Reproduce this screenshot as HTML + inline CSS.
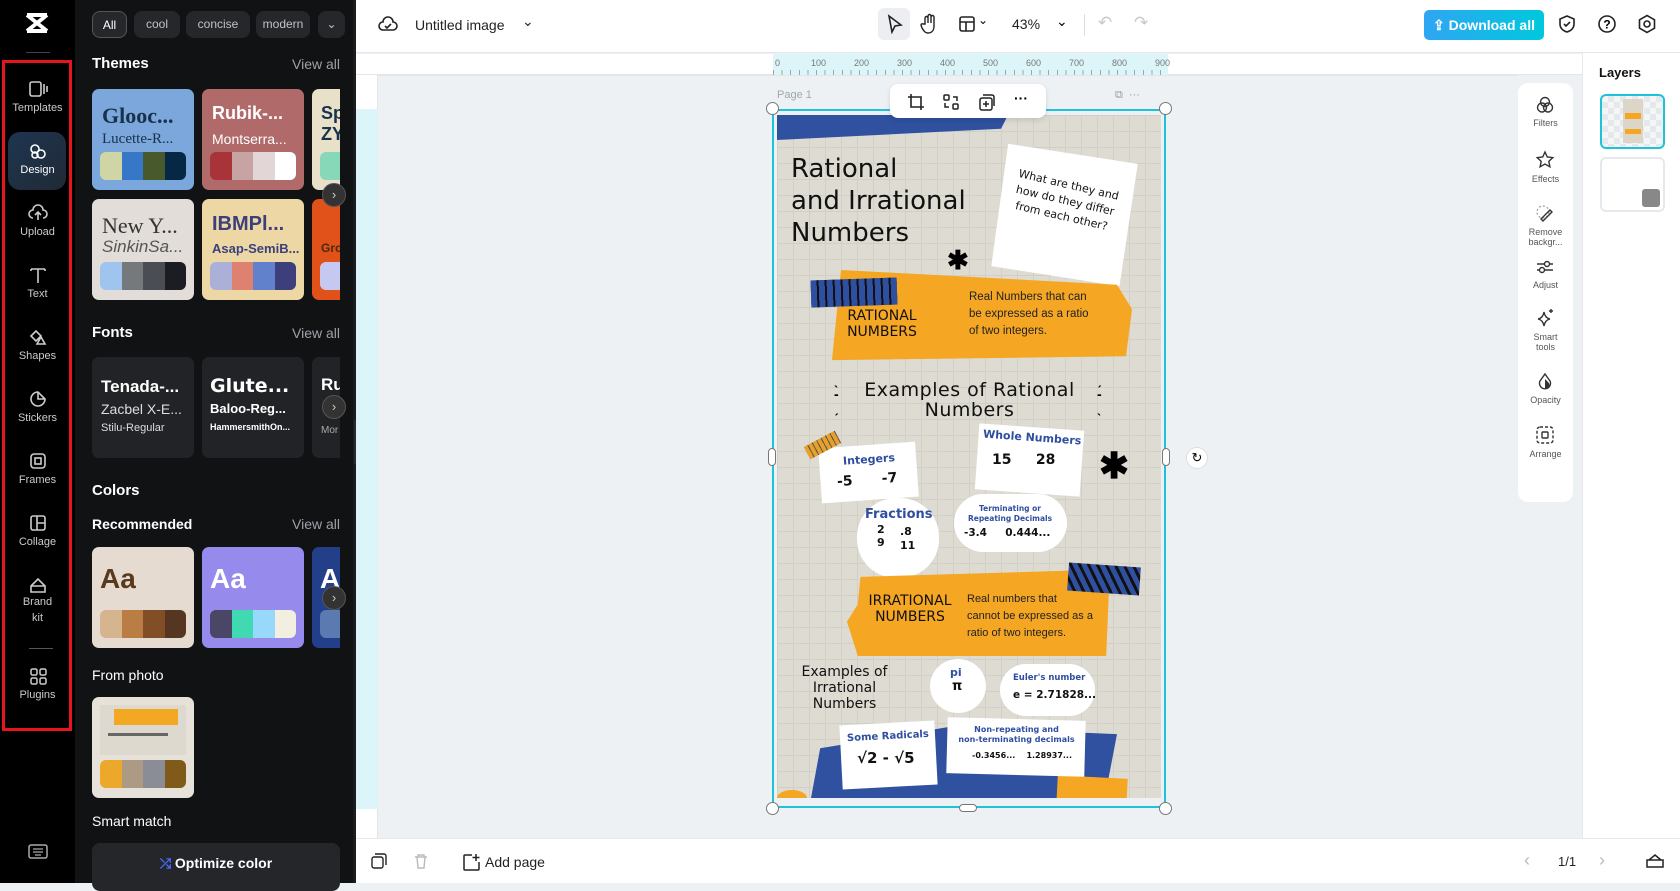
<!DOCTYPE html>
<html><head><meta charset="utf-8"><style>
*{box-sizing:border-box;margin:0;padding:0}
body{width:1680px;height:883px;overflow:hidden;font-family:"Liberation Sans",sans-serif;background:#eef1f4;position:relative}
.a{position:absolute}
.rail{left:0;top:0;width:75px;height:883px;background:#000}
.ri{position:absolute;left:0;width:75px;text-align:center;color:#c9cbd0;font-size:11px}
.ri svg{display:block;margin:0 auto 4px}
.panel{left:75px;top:0;width:281px;height:883px;background:#111214;color:#fff}
.chip{position:absolute;top:11px;height:27px;border-radius:8px;background:#26272b;color:#bfc2c8;font-size:12px;line-height:27px;text-align:center}
.h{position:absolute;font-weight:bold;font-size:15px;color:#fff}
.va{position:absolute;right:16px;font-size:14px;color:#9da1a8}
.card{position:absolute;width:102px;height:101px;border-radius:7px;overflow:hidden}
.sw{position:absolute;left:8px;bottom:10px;width:86px;height:28px;border-radius:6px;overflow:hidden;display:flex}
.sw i{flex:1}
.nx{position:absolute;width:24px;height:24px;border-radius:50%;background:#333;border:1px solid #555;color:#ccc;font-size:13px;line-height:22px;text-align:center}
.top{left:356px;top:0;width:1324px;height:53px;background:#fff;border-bottom:1px solid #e5e7eb}
.art{left:777px;top:115px;width:384px;height:683px;background:#dedbd2;overflow:hidden;
background-image:linear-gradient(#d2cfc6 1px,transparent 1px),linear-gradient(90deg,#d2cfc6 1px,transparent 1px);background-size:16px 16px}
.w{position:absolute;background:#fff}
.hw{font-family:"DejaVu Sans",sans-serif;color:#111}
.bl{color:#2f4ea0;font-weight:bold;font-family:"DejaVu Sans",sans-serif}
.tl{position:absolute;left:0;width:55px;text-align:center;font-size:9px;color:#555}
</style></head><body>

<div class="a rail">
 <svg class="a" style="left:24px;top:12px" width="26" height="22" viewBox="0 0 26 22"><path d="M3 3 L23 19 M23 3 L3 19 M3 3h20 M3 19h20" stroke="#fff" stroke-width="4" fill="none"/></svg>
 <div class="a" style="left:26px;top:52px;width:24px;height:1px;background:#444"></div>
 <div class="a" style="left:2px;top:60px;width:70px;height:671px;border:3px solid #e5141f"></div>
 <div class="ri" style="top:80px"><svg width="20" height="18"><rect x="2" y="2" width="11" height="14" rx="2" fill="none" stroke="#ccc" stroke-width="1.6"/><path d="M16 4v10M19 6v6" stroke="#ccc" stroke-width="1.6"/></svg>Templates</div>
 <div class="a" style="left:8px;top:132px;width:58px;height:58px;border-radius:12px;background:linear-gradient(135deg,#1e3550,#202a36)"></div>
 <div class="ri" style="top:142px;color:#fff"><svg width="20" height="18"><circle cx="7" cy="7" r="4" fill="none" stroke="#fff" stroke-width="1.6"/><circle cx="13" cy="12" r="4" fill="none" stroke="#fff" stroke-width="1.6"/><circle cx="7" cy="13" r="3" fill="none" stroke="#fff" stroke-width="1.6"/></svg>Design</div>
 <div class="ri" style="top:204px"><svg width="20" height="18"><path d="M5 14a4 4 0 0 1 0-8 5 5 0 0 1 10 0 4 4 0 0 1 0 8M10 8v8M7 11l3-3 3 3" fill="none" stroke="#ccc" stroke-width="1.6"/></svg>Upload</div>
 <div class="ri" style="top:266px"><svg width="20" height="18"><path d="M3 3h14M10 3v14M3 3v2M17 3v2" fill="none" stroke="#ccc" stroke-width="1.6"/></svg>Text</div>
 <div class="ri" style="top:328px"><svg width="20" height="18"><path d="M3 8l5-5 5 5-5 5z M9 16l4-7 4 7z" fill="none" stroke="#ccc" stroke-width="1.6"/></svg>Shapes</div>
 <div class="ri" style="top:390px"><svg width="20" height="18"><path d="M10 2a7 7 0 1 0 7 7l-7-7z M10 2v7h7" fill="none" stroke="#ccc" stroke-width="1.6"/></svg>Stickers</div>
 <div class="ri" style="top:452px"><svg width="20" height="18"><rect x="3" y="2" width="14" height="14" rx="3" fill="none" stroke="#ccc" stroke-width="1.6"/><rect x="7" y="6" width="6" height="6" fill="none" stroke="#ccc" stroke-width="1.6"/></svg>Frames</div>
 <div class="ri" style="top:514px"><svg width="20" height="18"><rect x="3" y="2" width="14" height="14" rx="2" fill="none" stroke="#ccc" stroke-width="1.6"/><path d="M9 2v14M9 9h8" stroke="#ccc" stroke-width="1.6"/></svg>Collage</div>
 <div class="ri" style="top:576px;line-height:16px"><svg width="20" height="18" style="margin-bottom:0"><path d="M3 10l7-7 7 7v6H3z M3 10h14" fill="none" stroke="#ccc" stroke-width="1.6"/></svg>Brand<br>kit</div>
 <div class="a" style="left:29px;top:648px;width:24px;height:1px;background:#555"></div>
 <div class="ri" style="top:667px"><svg width="20" height="18"><rect x="3" y="2" width="6" height="6" rx="1.5" fill="none" stroke="#ccc" stroke-width="1.5"/><rect x="12" y="2" width="6" height="6" rx="1.5" fill="none" stroke="#ccc" stroke-width="1.5"/><rect x="3" y="11" width="6" height="6" rx="1.5" fill="none" stroke="#ccc" stroke-width="1.5"/><rect x="12" y="11" width="6" height="6" rx="1.5" fill="none" stroke="#ccc" stroke-width="1.5"/></svg>Plugins</div>
 <svg class="a" style="left:28px;top:844px" width="20" height="16"><rect x="1" y="1" width="18" height="13" rx="2" fill="none" stroke="#aaa" stroke-width="1.5"/><path d="M5 5h10M5 8h10M7 11h6" stroke="#aaa" stroke-width="1.3"/></svg>
</div>

<div class="a panel">
 <div class="chip" style="left:17px;width:35px;border:1px solid #555;color:#fff">All</div>
 <div class="chip" style="left:59px;width:46px">cool</div>
 <div class="chip" style="left:111px;width:64px">concise</div>
 <div class="chip" style="left:181px;width:54px;overflow:hidden">modern</div>
 <div class="chip" style="left:243px;width:27px">⌄</div>
 <div class="h" style="left:17px;top:55px">Themes</div><div class="va" style="top:56px">View all</div>
 <div style="position:absolute;left:17px;top:89px;width:248px;height:212px;overflow:hidden">
  <div class="card" style="left:0;top:0;background:#7ba7dc"><div style="position:absolute;left:10px;top:14px;font:bold 22px 'Liberation Serif',serif;color:#17324a">Glooc...</div><div style="position:absolute;left:10px;top:42px;font:15px 'Liberation Serif',serif;color:#17324a">Lucette-R...</div><div class="sw"><i style="background:#cfd5a4"></i><i style="background:#3777c8"></i><i style="background:#485a2c"></i><i style="background:#062845"></i></div></div>
  <div class="card" style="left:110px;top:0;background:#b06a6a"><div style="position:absolute;left:10px;top:14px;font:bold 18px sans-serif;color:#fff">Rubik-...</div><div style="position:absolute;left:10px;top:42px;font:14px sans-serif;color:#fff">Montserra...</div><div class="sw"><i style="background:#a8343a"></i><i style="background:#c8a3a3"></i><i style="background:#e3d6d6"></i><i style="background:#fff"></i></div></div>
  <div class="card" style="left:220px;top:0;background:#e8e0c8"><div style="position:absolute;left:9px;top:14px;font:bold 18px sans-serif;color:#17324a">Sp<br>ZY</div><div style="position:absolute;left:8px;bottom:10px;width:30px;height:28px;background:#86d8b8;border-radius:6px"></div></div>
  <div class="card" style="left:0;top:110px;background:#e2ddd8"><div style="position:absolute;left:10px;top:14px;font:22px 'Liberation Serif',serif;color:#333">New Y...</div><div style="position:absolute;left:10px;top:38px;font:italic 17px sans-serif;color:#555">SinkinSa...</div><div class="sw"><i style="background:#9fc5ef"></i><i style="background:#76797c"></i><i style="background:#4a4d54"></i><i style="background:#1b1d22"></i></div></div>
  <div class="card" style="left:110px;top:110px;background:#edd7a5"><div style="position:absolute;left:10px;top:14px;font:bold 20px sans-serif;color:#3b3f7c">IBMPl...</div><div style="position:absolute;left:10px;top:42px;font:bold 13px sans-serif;color:#3b3f7c">Asap-SemiB...</div><div class="sw"><i style="background:#aab0d8"></i><i style="background:#df8170"></i><i style="background:#6281cc"></i><i style="background:#3c3f7c"></i></div></div>
  <div class="card" style="left:220px;top:110px;background:#e0521a"><div style="position:absolute;left:9px;top:42px;font:bold 12px sans-serif;color:#4a2a10">Gro</div><div style="position:absolute;left:8px;bottom:10px;width:30px;height:28px;background:#c5c8f0;border-radius:6px"></div></div>
 </div>
 <div class="nx" style="left:247px;top:183px">›</div>
 <div class="h" style="left:17px;top:324px">Fonts</div><div class="va" style="top:325px">View all</div>
 <div style="position:absolute;left:17px;top:357px;width:248px;height:102px;overflow:hidden">
  <div class="card" style="left:0;top:0;background:#222326"><div style="position:absolute;left:9px;top:20px;font:bold 17px sans-serif">Tenada-...</div><div style="position:absolute;left:9px;top:44px;font:14px sans-serif;color:#ddd">Zacbel X-E...</div><div style="position:absolute;left:9px;top:65px;font:11px sans-serif;color:#ddd">Stilu-Regular</div></div>
  <div class="card" style="left:110px;top:0;background:#222326"><div style="position:absolute;left:8px;top:18px;font:bold 19px 'DejaVu Sans',sans-serif">Glute...</div><div style="position:absolute;left:8px;top:44px;font:bold 13px sans-serif">Baloo-Reg...</div><div style="position:absolute;left:8px;top:65px;font:bold 9px sans-serif">HammersmithOn...</div></div>
  <div class="card" style="left:220px;top:0;background:#222326"><div style="position:absolute;left:9px;top:18px;font:bold 17px sans-serif">Ru</div><div style="position:absolute;left:9px;top:68px;font:10px sans-serif;color:#aaa">Mor</div></div>
 </div>
 <div class="nx" style="left:247px;top:395px">›</div>
 <div class="h" style="left:17px;top:482px">Colors</div>
 <div class="h" style="left:17px;top:516px;font-size:14px;font-weight:bold">Recommended</div><div class="va" style="top:516px">View all</div>
 <div style="position:absolute;left:17px;top:547px;width:248px;height:102px;overflow:hidden">
  <div class="card" style="left:0;top:0;background:#e5dbd0"><div style="position:absolute;left:8px;top:16px;font:bold 28px sans-serif;color:#5a3a1e">Aa</div><div class="sw"><i style="background:#d6b58e"></i><i style="background:#b97d45"></i><i style="background:#824e25"></i><i style="background:#563521"></i></div></div>
  <div class="card" style="left:110px;top:0;background:#968aec"><div style="position:absolute;left:8px;top:16px;font:bold 28px sans-serif;color:#fff">Aa</div><div class="sw"><i style="background:#4a4666"></i><i style="background:#40d9b1"></i><i style="background:#98d8fa"></i><i style="background:#f3efe0"></i></div></div>
  <div class="card" style="left:220px;top:0;background:#243f8a"><div style="position:absolute;left:8px;top:16px;font:bold 28px sans-serif;color:#fff">A</div><div style="position:absolute;left:8px;bottom:10px;width:30px;height:28px;background:#5a7ab0;border-radius:6px"></div></div>
 </div>
 <div class="nx" style="left:247px;top:586px">›</div>
 <div class="h" style="left:17px;top:667px;font-size:14px;font-weight:normal">From photo</div>
 <div class="card" style="left:17px;top:697px;background:#e6e2da"><div style="position:absolute;left:8px;top:8px;width:86px;height:50px;background:#ddd9cf"><div style="position:absolute;left:14px;top:4px;width:64px;height:16px;background:#f2a823"></div><div style="position:absolute;left:8px;top:28px;width:60px;height:3px;background:#666"></div></div><div class="sw"><i style="background:#eba82a"></i><i style="background:#ad9a84"></i><i style="background:#8a8d95"></i><i style="background:#805a19"></i></div></div>
 <div class="h" style="left:17px;top:813px;font-size:14px;font-weight:normal">Smart match</div>
 <div class="a" style="left:17px;top:843px;width:248px;height:48px;border-radius:8px;background:#25262a;text-align:center;line-height:40px;font-weight:bold;font-size:14px"><span style="color:#4a6cf7">⤮</span> Optimize color</div>
 <div class="a" style="left:278px;top:0;width:3px;height:883px;background:#1b1c1f"></div>
</div>
<div class="a" style="left:354px;top:420px;width:8px;height:44px;background:#2a2b2e;border-radius:0 6px 6px 0"></div>

<div class="a top">
 <svg class="a" style="left:22px;top:15px" width="20" height="20"><path d="M5 15a4 4 0 0 1 0-8 5 5 0 0 1 10 0 4 4 0 0 1 0 8z M7 11l2 2 4-4" fill="none" stroke="#222" stroke-width="1.6"/></svg>
 <div class="a" style="left:59px;top:17px;font-size:14px;color:#222">Untitled image</div>
 <div class="a" style="left:166px;top:13px;font-size:14px;color:#222">⌄</div>
 <div class="a" style="left:522px;top:8px;width:32px;height:32px;border-radius:6px;background:#eceef1"></div>
 <svg class="a" style="left:530px;top:14px" width="18" height="20"><path d="M3 2l12 9-6 1-3 6z" fill="none" stroke="#222" stroke-width="1.6"/></svg>
 <svg class="a" style="left:563px;top:13px" width="20" height="22"><path d="M6 11V5a1.5 1.5 0 0 1 3 0v5V3a1.5 1.5 0 0 1 3 0v7V4a1.5 1.5 0 0 1 3 0v9c0 4-2 7-6 7-3 0-4-2-6-5l-1-3a1.3 1.3 0 0 1 2-1z" fill="none" stroke="#222" stroke-width="1.4"/></svg>
 <svg class="a" style="left:602px;top:15px" width="18" height="18"><rect x="2" y="2" width="14" height="14" rx="2" fill="none" stroke="#222" stroke-width="1.6"/><path d="M2 7h14M8 7v9" stroke="#222" stroke-width="1.6"/></svg>
 <div class="a" style="left:622px;top:13px;font-size:12px">⌄</div>
 <div class="a" style="left:656px;top:16px;font-size:14px;color:#222">43%</div>
 <div class="a" style="left:700px;top:13px;font-size:14px">⌄</div>
 <div class="a" style="left:728px;top:14px;width:1px;height:22px;background:#ddd"></div>
 <div class="a" style="left:742px;top:13px;font-size:17px;color:#c8c8c8">↶</div>
 <div class="a" style="left:778px;top:13px;font-size:17px;color:#c8c8c8">↷</div>
 <div class="a" style="left:1068px;top:10px;width:120px;height:30px;border-radius:5px;background:linear-gradient(90deg,#2fa6f3,#00c8dc);color:#fff;font-weight:bold;font-size:14px;line-height:30px;text-align:center">⇪ Download all</div>
 <svg class="a" style="left:1202px;top:14px" width="18" height="20"><path d="M9 2l7 3v5c0 4-3 7-7 8-4-1-7-4-7-8V5z M6 10l2 2 4-4" fill="none" stroke="#222" stroke-width="1.6"/></svg>
 <svg class="a" style="left:1241px;top:14px" width="20" height="20"><circle cx="10" cy="10" r="8" fill="none" stroke="#222" stroke-width="1.6"/><text x="10" y="14.5" font-size="12" text-anchor="middle" font-weight="bold" font-family="Liberation Sans">?</text></svg>
 <svg class="a" style="left:1281px;top:14px" width="20" height="20"><path d="M10 1.5l7.5 4.3v8.4L10 18.5l-7.5-4.3V5.8z" fill="none" stroke="#222" stroke-width="1.6"/><circle cx="10" cy="10" r="3" fill="none" stroke="#222" stroke-width="1.6"/></svg>
</div>

<!-- rulers -->
<div class="a" style="left:356px;top:54px;width:1226px;height:21px;background:#fff;border-bottom:1px solid #e3e5e8"></div>
<div class="a" style="left:773px;top:54px;width:395px;height:21px;background:#dcf5f8;font-size:9px;color:#777">
 <span class="a" style="left:2px;top:4px">0</span><span class="a" style="left:38px;top:4px">100</span><span class="a" style="left:81px;top:4px">200</span><span class="a" style="left:124px;top:4px">300</span><span class="a" style="left:167px;top:4px">400</span><span class="a" style="left:210px;top:4px">500</span><span class="a" style="left:253px;top:4px">600</span><span class="a" style="left:296px;top:4px">700</span><span class="a" style="left:339px;top:4px">800</span><span class="a" style="left:382px;top:4px">900</span>
 <div class="a" style="left:0;bottom:0;width:395px;height:5px;background:repeating-linear-gradient(90deg,#9aa 0 1px,transparent 1px 8.6px)"></div>
</div>
<div class="a" style="left:356px;top:75px;width:22px;height:763px;background:#fff;border-right:1px solid #e3e5e8"></div>
<div class="a" style="left:356px;top:109px;width:22px;height:700px;background:#dcf5f8"></div>
<div class="a" style="left:378px;top:75px;width:1140px;height:1px;background:#e3e5e8"></div>

<!-- page -->
<div class="a" style="left:777px;top:89px;font-size:11px;color:#9aa">Page 1</div>
<div class="a" style="left:1115px;top:89px;font-size:11px;color:#999">⧉ &nbsp;···</div>
<div class="a" style="left:772px;top:109px;width:394px;height:699px;border:2px solid #1fc3d9"></div>
<div class="a art">
 <div class="a" style="left:0;top:0;width:231px;height:25px;background:#2f51a0;clip-path:polygon(0 0,100% 0,97% 55%,0 100%)"></div>
 <div class="a hw" style="left:14px;top:38px;font-size:26px;line-height:32px">Rational<br>and Irrational<br>Numbers</div>
 <div class="w" style="left:220px;top:35px;width:135px;height:130px;transform:rotate(6deg);clip-path:polygon(3% 0,100% 5%,96% 100%,0 95%)"></div>
 <div class="a hw" style="left:232px;top:62px;width:112px;font-size:11px;line-height:16px;text-align:center;transform:rotate(13deg)">What are they and how do they differ from each other?</div>
 <div class="a" style="left:170px;top:130px;font-size:26px;font-weight:bold">✱</div>
 <div class="a" style="left:55px;top:155px;width:300px;height:98px;background:#f5a623;clip-path:polygon(3% 0,95% 15%,100% 40%,98% 88%,0 92%)"></div>
 <div class="a" style="left:34px;top:164px;width:86px;height:27px;background:repeating-linear-gradient(90deg,#2f4fa0 0 6px,#111 6px 8px),#2f4fa0;transform:rotate(-2deg)"></div>
 <div class="a hw" style="left:62px;top:193px;width:86px;font-size:14px;line-height:16px;text-align:center">RATIONAL<br>NUMBERS</div>
 <div class="a" style="left:192px;top:174px;font-size:11.5px;line-height:17px;color:#222">Real Numbers that can<br>be expressed as a ratio<br>of two integers.</div>
 <div class="a hw" style="left:35px;top:265px;width:315px;text-align:center;font-size:19px;line-height:20px;letter-spacing:.5px">Examples of Rational<br>Numbers</div>
 <div class="a" style="left:57px;top:258px;font-size:14px;line-height:14px;font-weight:bold">ˎ<br>-<br>ˏ</div>
 <div class="a" style="left:320px;top:258px;font-size:14px;line-height:14px;font-weight:bold">ˏ<br>-<br>ˎ</div>
 <div class="w" style="left:43px;top:330px;width:97px;height:55px;transform:rotate(-4deg)"></div>
 <div class="a" style="left:28px;top:323px;width:35px;height:14px;background:repeating-linear-gradient(90deg,#e7a029 0 4px,#555 4px 5px);transform:rotate(-28deg)"></div>
 <div class="a bl" style="left:66px;top:338px;font-size:11px;transform:rotate(-4deg)">Integers</div>
 <div class="a hw" style="left:60px;top:357px;font-size:14px;font-weight:bold;transform:rotate(-4deg)">-5 &nbsp;&nbsp;&nbsp;&nbsp; -7</div>
 <div class="w" style="left:200px;top:312px;width:105px;height:66px;transform:rotate(4deg)"></div>
 <div class="a bl" style="left:206px;top:316px;font-size:11px;transform:rotate(4deg)">Whole Numbers</div>
 <div class="a hw" style="left:215px;top:337px;font-size:14px;font-weight:bold">15 &nbsp;&nbsp;&nbsp; 28</div>
 <div class="a" style="left:322px;top:330px;font-size:36px;font-weight:bold">✱</div>
 <div class="w" style="left:80px;top:383px;width:82px;height:80px;border-radius:48%"></div>
 <div class="a bl" style="left:88px;top:392px;font-size:13px">Fractions</div>
 <div class="a hw" style="left:100px;top:408px;font-size:11px;line-height:13px;font-weight:bold;text-align:center">2<br>9</div>
 <div class="a hw" style="left:123px;top:410px;font-size:11px;line-height:14px;font-weight:bold">.8<br>11</div>
 <div class="w" style="left:177px;top:379px;width:113px;height:58px;border-radius:30px"></div>
 <div class="a bl" style="left:183px;top:389px;width:100px;text-align:center;font-size:7.5px;line-height:10px">Terminating or<br>Repeating Decimals</div>
 <div class="a hw" style="left:187px;top:412px;font-size:10.5px;font-weight:bold">-3.4 &nbsp;&nbsp;&nbsp; 0.444...</div>
 <div class="a" style="left:70px;top:455px;width:270px;height:86px;background:#f5a623;clip-path:polygon(5% 8%,90% 0,97% 25%,96% 100%,4% 100%,0 60%,4% 40%)"></div>
 <div class="a" style="left:291px;top:450px;width:72px;height:28px;background:repeating-linear-gradient(60deg,#2f4fa0 0 5px,#111 5px 8px);transform:rotate(4deg)"></div>
 <div class="a hw" style="left:78px;top:478px;width:110px;font-size:14px;line-height:16px;text-align:center">IRRATIONAL<br>NUMBERS</div>
 <div class="a" style="left:190px;top:476px;font-size:11px;line-height:17px;color:#222">Real numbers that<br>cannot be expressed as a<br>ratio of two integers.</div>
 <div class="a" style="left:34px;top:612px;width:306px;height:71px;background:#2f51a0;clip-path:polygon(3% 30%,45% 0,100% 10%,96% 100%,0 100%)"></div>
 <div class="a" style="left:0;top:675px;width:30px;height:16px;background:#f5a623;border-radius:50%"></div>
 <div class="a" style="left:280px;top:662px;width:70px;height:30px;background:#f5a623;transform:rotate(3deg)"></div>
 <div class="a hw" style="left:20px;top:549px;width:95px;text-align:center;font-size:14px;line-height:16px">Examples of<br>Irrational<br>Numbers</div>
 <div class="w" style="left:153px;top:544px;width:56px;height:54px;border-radius:50%"></div>
 <div class="a bl" style="left:173px;top:551px;font-size:11px">pi</div>
 <div class="a hw" style="left:175px;top:564px;font-size:13px;font-weight:bold">π</div>
 <div class="w" style="left:223px;top:549px;width:95px;height:52px;border-radius:26px"></div>
 <div class="a bl" style="left:236px;top:558px;font-size:8.5px">Euler's number</div>
 <div class="a hw" style="left:236px;top:574px;font-size:10.5px;font-weight:bold">e = 2.71828...</div>
 <div class="w" style="left:64px;top:608px;width:95px;height:64px;transform:rotate(-3deg)"></div>
 <div class="a bl" style="left:70px;top:616px;font-size:10px;transform:rotate(-3deg)">Some Radicals</div>
 <div class="a hw" style="left:80px;top:634px;font-size:15px;font-weight:bold">√2 - √5</div>
 <div class="w" style="left:170px;top:604px;width:138px;height:56px;transform:rotate(1.5deg)"></div>
 <div class="a bl" style="left:172px;top:610px;width:135px;text-align:center;font-size:8px;line-height:10px">Non-repeating and<br>non-terminating decimals</div>
 <div class="a hw" style="left:195px;top:636px;font-size:8px;font-weight:bold">-0.3456... &nbsp;&nbsp; 1.28937...</div>
</div>
<!-- handles -->
<div class="a" style="left:766px;top:102px;width:13px;height:13px;border-radius:50%;background:#fff;border:1px solid #777"></div>
<div class="a" style="left:1159px;top:102px;width:13px;height:13px;border-radius:50%;background:#fff;border:1px solid #777"></div>
<div class="a" style="left:766px;top:802px;width:13px;height:13px;border-radius:50%;background:#fff;border:1px solid #777"></div>
<div class="a" style="left:1159px;top:802px;width:13px;height:13px;border-radius:50%;background:#fff;border:1px solid #777"></div>
<div class="a" style="left:768px;top:448px;width:8px;height:18px;border-radius:4px;background:#fff;border:1px solid #777"></div>
<div class="a" style="left:1162px;top:448px;width:8px;height:18px;border-radius:4px;background:#fff;border:1px solid #777"></div>
<div class="a" style="left:959px;top:804px;width:18px;height:8px;border-radius:4px;background:#fff;border:1px solid #777"></div>
<div class="a" style="left:1186px;top:447px;width:22px;height:22px;border-radius:50%;background:#fff;border:1px solid #ddd;font-size:13px;text-align:center;line-height:20px">↻</div>
<div class="a" style="left:890px;top:84px;width:156px;height:34px;border-radius:8px;background:#fff;box-shadow:0 2px 6px rgba(0,0,0,.12)">
 <svg class="a" style="left:17px;top:9px" width="18" height="18"><path d="M4 1v13h13M1 4h13v13" fill="none" stroke="#222" stroke-width="1.6"/></svg>
 <svg class="a" style="left:52px;top:9px" width="18" height="18"><rect x="2" y="2" width="5" height="5" rx="1" fill="none" stroke="#222" stroke-width="1.5"/><rect x="11" y="11" width="5" height="5" rx="1" fill="none" stroke="#222" stroke-width="1.5"/><path d="M11 4h4v4M7 14H3v-4" fill="none" stroke="#222" stroke-width="1.5"/></svg>
 <svg class="a" style="left:88px;top:9px" width="18" height="18"><rect x="2" y="5" width="12" height="12" rx="2" fill="none" stroke="#222" stroke-width="1.5"/><path d="M5 2h9a2 2 0 0 1 2 2v9M8 8v6M5 11h6" fill="none" stroke="#222" stroke-width="1.5"/></svg>
 <div class="a" style="left:124px;top:6px;font-size:14px;font-weight:bold">···</div>
</div>

<!-- tools panel -->
<div class="a" style="left:1518px;top:83px;width:55px;height:419px;background:#fff;border-radius:10px">
 <svg class="a" style="left:17px;top:12px" width="20" height="20"><circle cx="10" cy="7" r="4.5" fill="none" stroke="#333" stroke-width="1.4"/><circle cx="7" cy="12.5" r="4.5" fill="none" stroke="#333" stroke-width="1.4"/><circle cx="13" cy="12.5" r="4.5" fill="none" stroke="#333" stroke-width="1.4"/></svg>
 <div class="tl" style="top:35px">Filters</div>
 <svg class="a" style="left:17px;top:67px" width="20" height="20"><path d="M10 2l2.3 5 5.5.6-4 3.8 1.1 5.4L10 14l-4.9 2.8 1.1-5.4-4-3.8 5.5-.6z" fill="none" stroke="#333" stroke-width="1.4"/></svg>
 <div class="tl" style="top:91px">Effects</div>
 <svg class="a" style="left:17px;top:120px" width="20" height="20"><circle cx="8" cy="9" r="6" fill="none" stroke="#999" stroke-width="1.2" stroke-dasharray="2 2"/><path d="M6 16l9-9 2 2-9 9z" fill="none" stroke="#333" stroke-width="1.4"/></svg>
 <div class="tl" style="top:144px;line-height:10px">Remove<br>backgr...</div>
 <svg class="a" style="left:17px;top:174px" width="20" height="20"><path d="M2 7h16M2 13h16" stroke="#333" stroke-width="1.4"/><circle cx="12" cy="7" r="2.5" fill="#fff" stroke="#333" stroke-width="1.4"/><circle cx="7" cy="13" r="2.5" fill="#fff" stroke="#333" stroke-width="1.4"/></svg>
 <div class="tl" style="top:197px">Adjust</div>
 <svg class="a" style="left:17px;top:225px" width="20" height="20"><path d="M9 4q1 6 6 7-5 1-6 7-1-6-6-7 5-1 6-7z M16 1v4M14 3h4" fill="none" stroke="#333" stroke-width="1.4"/></svg>
 <div class="tl" style="top:249px;line-height:10px">Smart<br>tools</div>
 <svg class="a" style="left:17px;top:289px" width="20" height="20"><path d="M10 2l5 7a5.5 5.5 0 1 1-10 0z" fill="none" stroke="#333" stroke-width="1.4"/><path d="M10 7v10a4 4 0 0 0 3-7z" fill="#333"/></svg>
 <div class="tl" style="top:312px">Opacity</div>
 <svg class="a" style="left:17px;top:342px" width="20" height="20"><rect x="2" y="2" width="16" height="16" rx="3" fill="none" stroke="#333" stroke-width="1.4" stroke-dasharray="3 2"/><rect x="7" y="7" width="6" height="6" rx="1" fill="none" stroke="#333" stroke-width="1.4"/></svg>
 <div class="tl" style="top:366px">Arrange</div>
</div>

<!-- layers panel -->
<div class="a" style="left:1582px;top:53px;width:98px;height:830px;background:#fff;border-left:1px solid #e6e8eb">
 <div class="a" style="left:16px;top:12px;font-weight:bold;font-size:13px;color:#111">Layers</div>
 <div class="a" style="left:17px;top:41px;width:65px;height:55px;border:2px solid #1fc3d9;border-radius:6px;background:repeating-conic-gradient(#e6e9ec 0 25%,#f4f5f6 0 50%) 0 0/12px 12px"><div class="a" style="left:21px;top:3px;width:20px;height:44px;background:#dcd6c8"><div class="a" style="left:2px;top:14px;width:16px;height:6px;background:#f5a623"></div><div class="a" style="left:2px;top:30px;width:16px;height:5px;background:#f5a623"></div></div></div>
 <div class="a" style="left:17px;top:104px;width:65px;height:55px;border:2px solid #e4e9ed;border-radius:6px;background:#fff"><div class="a" style="right:3px;bottom:3px;width:18px;height:18px;border-radius:3px;background:#888"></div></div>
</div>

<!-- bottom bar -->
<div class="a" style="left:356px;top:838px;width:1324px;height:45px;background:#fff;border-top:1px solid #e6e8eb">
 <svg class="a" style="left:15px;top:14px" width="16" height="16"><rect x="1" y="4" width="11" height="11" rx="2" fill="none" stroke="#222" stroke-width="1.4"/><path d="M4 1h9a2 2 0 0 1 2 2v9" fill="none" stroke="#222" stroke-width="1.4"/></svg>
 <svg class="a" style="left:57px;top:14px" width="16" height="16"><path d="M2 4h12M5 4V2h6v2M4 4l1 11h6l1-11" fill="none" stroke="#bbb" stroke-width="1.4"/></svg>
 <svg class="a" style="left:106px;top:14px" width="18" height="18"><path d="M10 2H3a1 1 0 0 0-1 1v13a1 1 0 0 0 1 1h13a1 1 0 0 0 1-1V9M14 1v7M10.5 4.5h7" fill="none" stroke="#222" stroke-width="1.5"/></svg>
 <div class="a" style="left:129px;top:15px;font-size:14px;color:#222">Add page</div>
 <div class="a" style="left:1168px;top:11px;font-size:18px;color:#bbb">‹</div>
 <div class="a" style="left:1202px;top:15px;font-size:13px;color:#222">1/1</div>
 <div class="a" style="left:1243px;top:11px;font-size:18px;color:#bbb">›</div>
 <svg class="a" style="left:1290px;top:14px" width="18" height="16"><path d="M3 7l6-5 6 5M1 7h16v7H1z" fill="none" stroke="#222" stroke-width="1.5"/></svg>
</div>
</body></html>
